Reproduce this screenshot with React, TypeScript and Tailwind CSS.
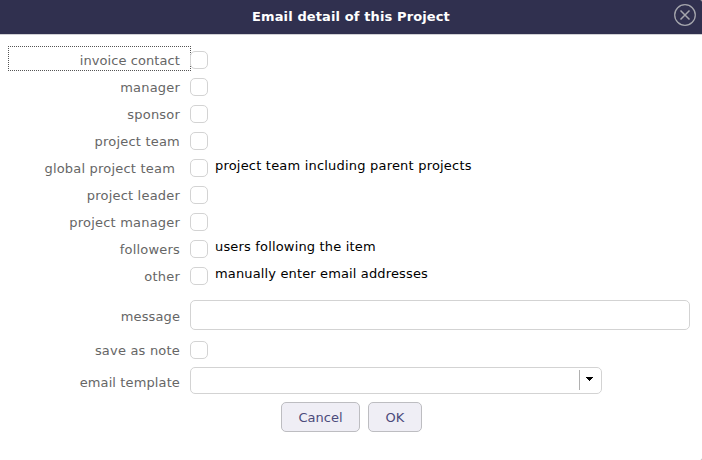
import type { ReactNode } from "react";

function CheckBox() {
  return <div className="h-[18px] w-[18px] shrink-0 rounded-[5px] border border-[#d3d3d3] bg-white" />;
}

interface LabelProps {
  children: ReactNode;
  focused?: boolean;
  indent?: boolean;
  tracking?: string;
}

function Label({ children, focused, indent, tracking = "tracking-[0.2px]" }: LabelProps) {
  return (
    <div
      className={`h-[25px] w-[183px] shrink-0 border border-dotted text-right leading-[27px] whitespace-nowrap text-[#666666] ${tracking} ${
        focused ? "border-[#555555]" : "border-transparent"
      } ${indent ? "pr-[15px]" : "pr-[10px]"}`}
    >
      {children}
    </div>
  );
}

const recipients = [
  { label: "invoice contact", tracking: "tracking-[0.08px]" },
  { label: "manager" },
  { label: "sponsor" },
  { label: "project team" },
  { label: "global project team", hint: "project team including parent projects", hintTracking: "tracking-[0.2px]" },
  { label: "project leader" },
  { label: "project manager" },
  { label: "followers", hint: "users following the item", hintTracking: "tracking-[0.17px]" },
  { label: "other", hint: "manually enter email addresses", hintTracking: "tracking-[0.14px]" },
];

export default function App() {
  return (
    <div className="bg-[#b0b0b0]">
      <div className="h-[460px] w-[702px] overflow-hidden rounded-r-[2px] bg-white font-['DejaVu_Sans',Verdana,sans-serif] text-[13px]">
        <header className="grid h-[35px] grid-cols-[34px_1fr_34px] border-b border-[#d0d0d4] bg-[#30304f]">
          <span />
          <h1 className="pt-px text-center text-[13px] leading-[32px] font-bold tracking-[0.12px] text-white">
            Email detail of this Project
          </h1>
          <button className="flex items-start pt-[4px] pl-[5px]">
            <svg width="24" height="24" viewBox="0 0 24 24" fill="none" stroke="#a4a5ac" className="block">
              <circle cx="12" cy="11" r="10.3" strokeWidth="1.3" />
              <path d="M7.5 6.5l9 9M16.5 6.5l-9 9" strokeWidth="1.5" />
            </svg>
          </button>
        </header>

        <main className="pt-[11px] pl-2">
          {recipients.map((r, i) => (
            <div key={r.label} className="flex h-[27px]">
              <Label focused={i === 0} indent={i === 4} tracking={r.tracking}>
                {r.label}
              </Label>
              <div className="-ml-px pt-[5px]">
                <CheckBox />
              </div>
              {r.hint && (
                <span className={`pl-[7px] leading-[23px] whitespace-nowrap text-black ${r.hintTracking}`}>{r.hint}</span>
              )}
            </div>
          ))}

          <div className="mt-[11px] flex h-[36px]">
            <div className="pt-[2px]">
              <Label tracking="tracking-[0.12px]">message</Label>
            </div>
            <div className="-ml-px h-[30px] w-[500px] rounded-[5px] border border-[#d3d3d3]" />
          </div>

          <div className="flex h-[31px]">
            <Label>save as note</Label>
            <div className="-ml-px pt-[5px]">
              <CheckBox />
            </div>
          </div>

          <div className="flex h-[35px]">
            <div className="pt-px">
              <Label tracking="tracking-[0.12px]">email template</Label>
            </div>
            <div className="-ml-px flex h-[27px] w-[412px] justify-end rounded-[5px] border border-[#d3d3d3]">
              <div className="mt-[2px] h-[20px] w-[22px] border-l border-[#b0b0b0] pt-[7px] pl-[6px]">
                <svg width="7" height="4" viewBox="0 0 7 4" shapeRendering="crispEdges" className="block">
                  <path d="M0 0h7v1H0zM1 1h5v1H1zM2 2h3v1H2zM3 3h1v1H3z" />
                </svg>
              </div>
            </div>
          </div>

          <div className="flex gap-2 pl-[273px] text-[#4b4b7b]">
            <button className="h-[30px] w-[79px] rounded-[5px] border border-[#bdbdc1] bg-[#efeef5] pt-px">Cancel</button>
            <button className="h-[30px] w-[54px] rounded-[5px] border border-[#bdbdc1] bg-[#efeef5] pt-px">OK</button>
          </div>
        </main>
      </div>
    </div>
  );
}
